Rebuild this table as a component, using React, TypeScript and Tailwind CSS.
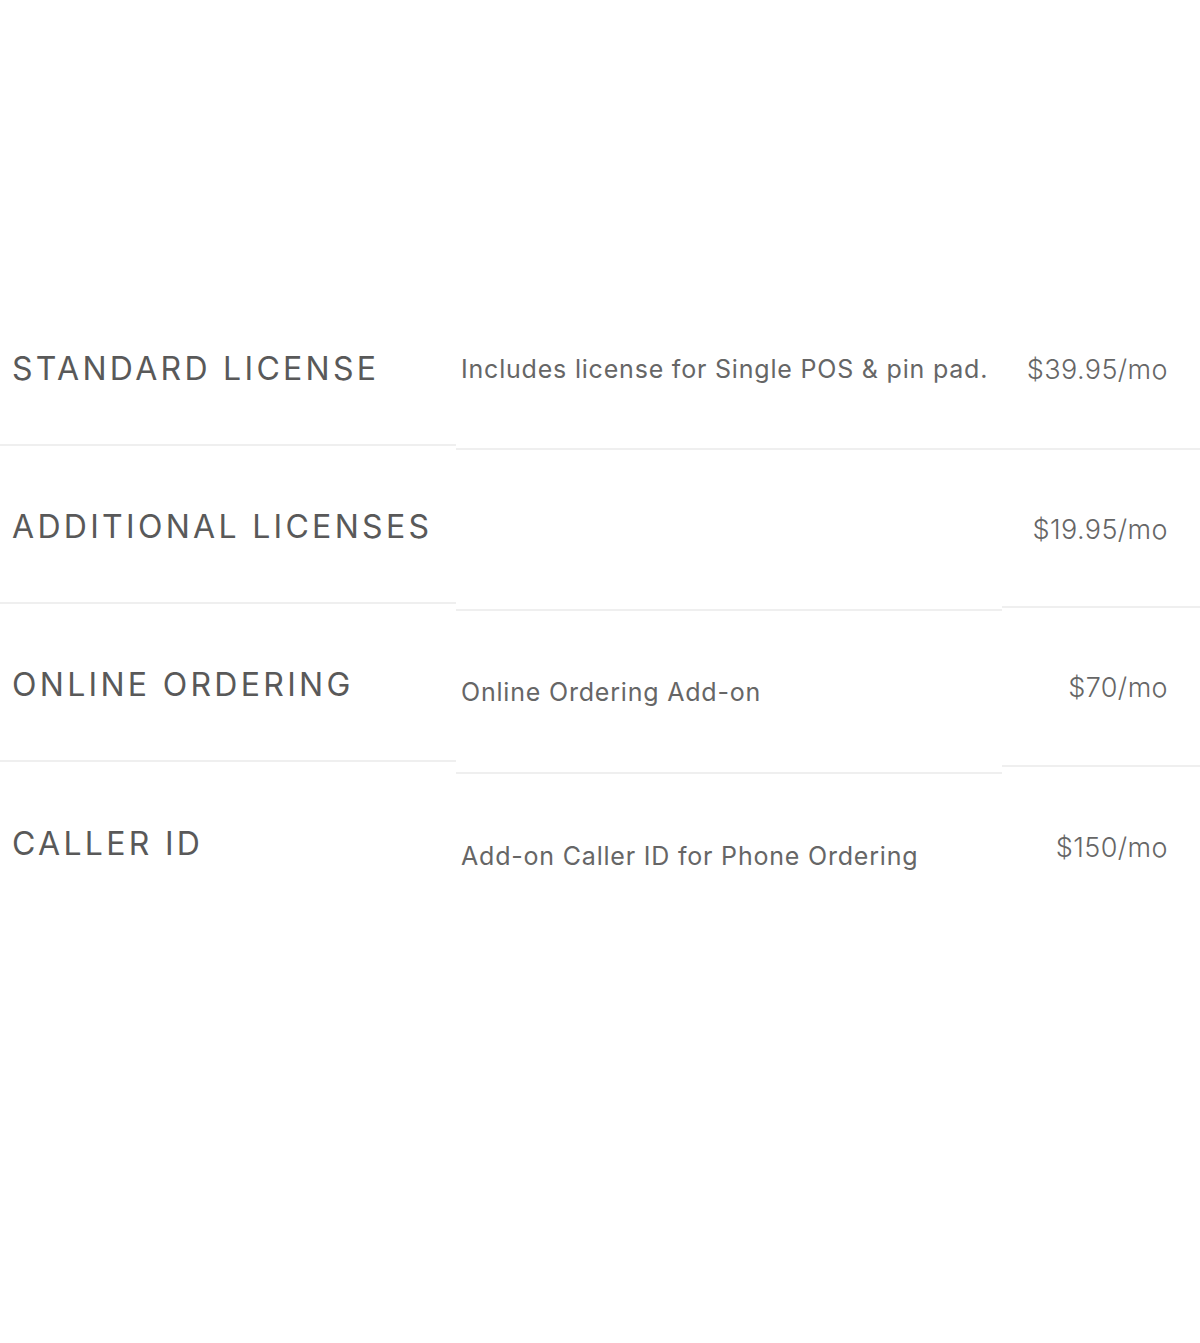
import React from "react";

type Plan = {
    title: string;
    description: string;
    price: string;
};

const plans: Plan[] = [
    {
        title: "STANDARD LICENSE",
        description: "Includes license for Single POS & pin pad.",
        price: "$39.95/mo",
    },
    { title: "ADDITIONAL LICENSES", description: "", price: "$19.95/mo" },
    {
        title: "ONLINE ORDERING",
        description: "Online Ordering Add-on",
        price: "$70/mo",
    },
    {
        title: "CALLER ID",
        description: "Add-on Caller ID for Phone Ordering",
        price: "$150/mo",
    },
];

// each column is its own stack, so the row heights differ a little
const titleRows = ["h-[158px]", "h-[158px]", "h-[158px]", "h-[158px]"];
const descRows = ["h-[162px]", "h-[161px]", "h-[163px]", "h-[163px]"];
const priceRows = ["h-[162px]", "h-[158px]", "h-[159px]", "h-[158px]"];

const App = () => {
    return (
        <div
            className="w-[1200px] h-[1343px] bg-white pt-[288px] flex items-start"
            style={{ fontFamily: "Inter, 'Open Sans', sans-serif" }}
        >
            <div className="w-[456px] flex flex-col">
                {plans.map((p, i) => (
                    <div
                        key={p.title}
                        className={`${titleRows[i]} flex items-center pl-[12px] pt-[5px] ${
                            i < plans.length - 1 ? "border-b-2 border-[#efefef]" : ""
                        }`}
                    >
                        <h3 className="text-[32px] tracking-[3.3px] text-[#595959] font-normal leading-none">
                            {p.title}
                        </h3>
                    </div>
                ))}
            </div>

            <div className="w-[546px] flex flex-col">
                {plans.map((p, i) => (
                    <div
                        key={p.title}
                        className={`${descRows[i]} flex items-center pl-[5px] pt-[2px] ${
                            i < plans.length - 1 ? "border-b-2 border-[#efefef]" : ""
                        }`}
                    >
                        <p className="text-[25px] tracking-[0.8px] text-[#666666] leading-none">
                            {p.description}
                        </p>
                    </div>
                ))}
            </div>

            <div className="flex-1 flex flex-col">
                {plans.map((p, i) => (
                    <div
                        key={p.title}
                        className={`${priceRows[i]} flex items-center justify-end pr-[32px] pt-[2px] ${
                            i < plans.length - 1 ? "border-b-2 border-[#efefef]" : ""
                        }`}
                    >
                        <span className="text-[27px] tracking-[0.4px] font-light text-[#666666] leading-none">
                            {p.price}
                        </span>
                    </div>
                ))}
            </div>
        </div>
    );
};

export default App;
